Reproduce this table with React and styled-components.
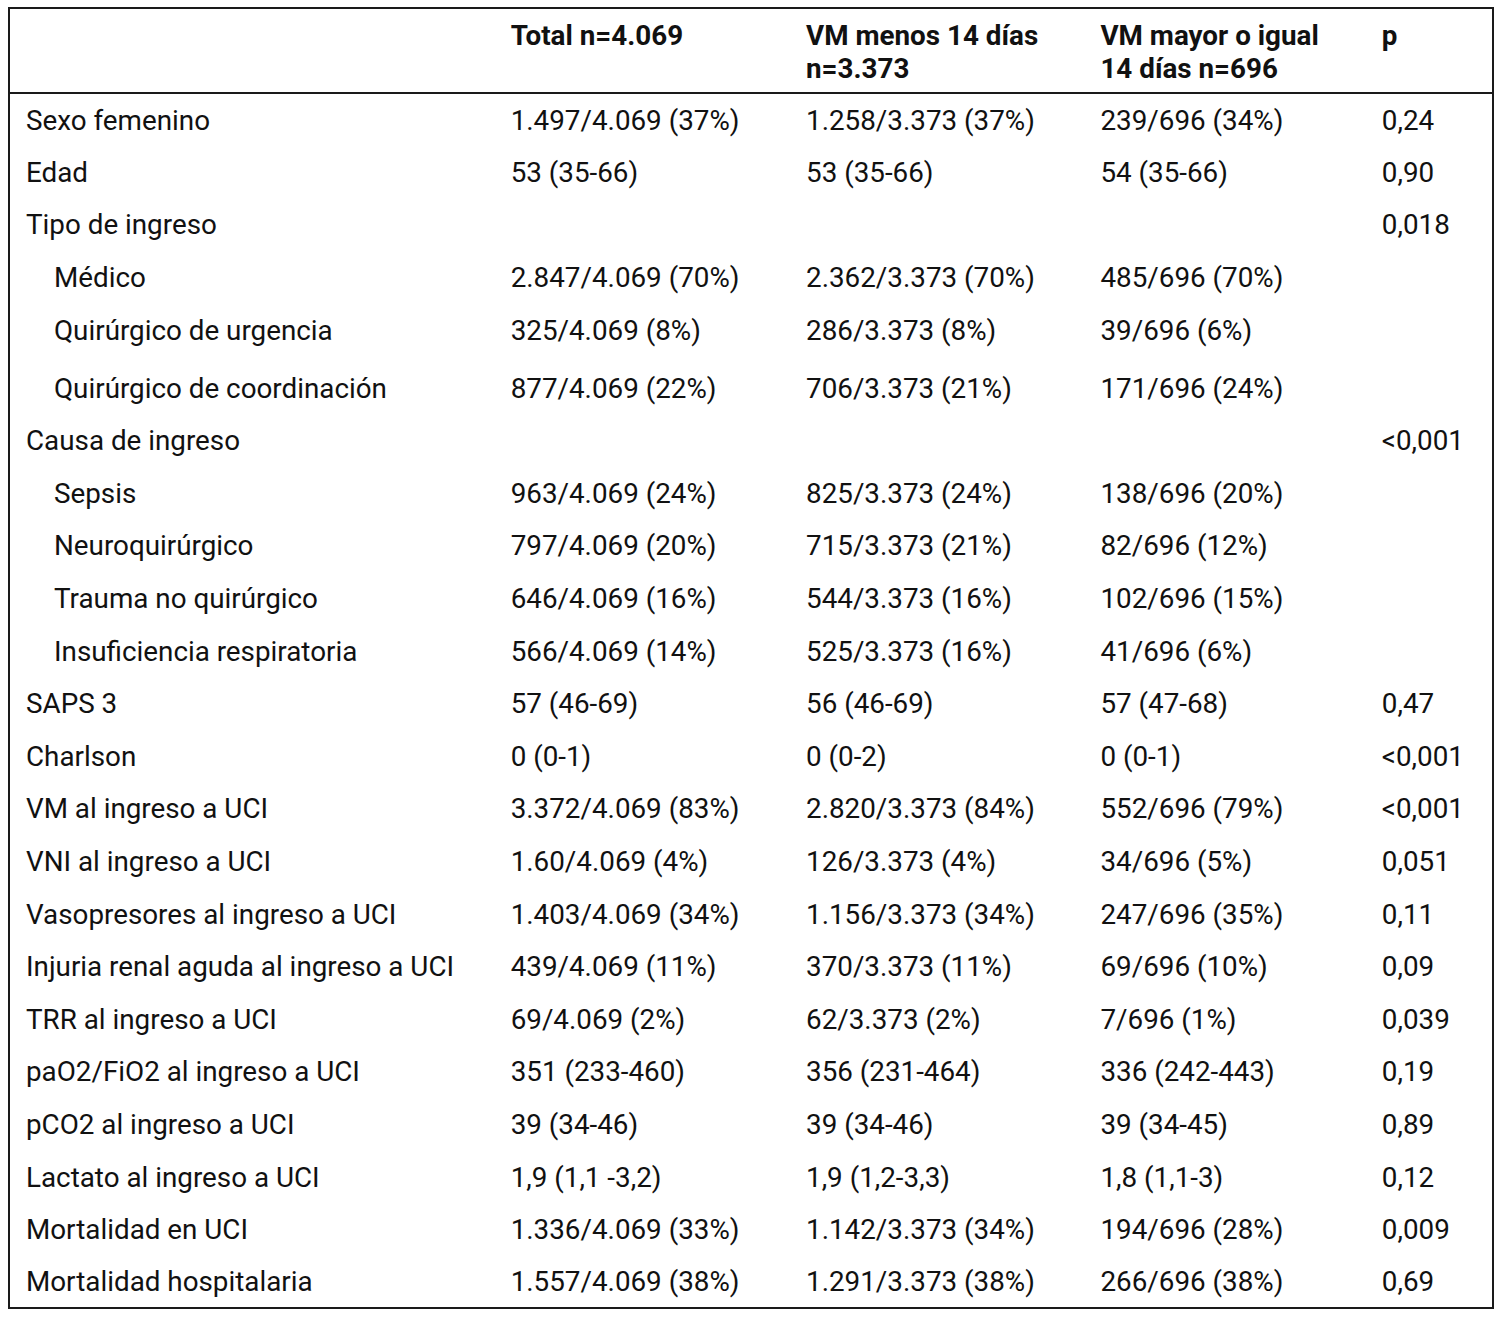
import React from "react";
import styled, { createGlobalStyle } from "styled-components";

const Global = createGlobalStyle`
  html, body { margin: 0; padding: 0; background: #fff; }
  body { font-family: Roboto, "Noto Sans", "Liberation Sans", sans-serif; color: #111; }
`;

const Page = styled.div`
  padding: 7px 0 0 8px;
`;

const Table = styled.table`
  border-collapse: collapse;
  border: 2px solid #1a1a1a;
  width: 1486px;
  table-layout: fixed;
  font-size: 27.8px;
`;

const Col = styled.col`
  width: ${(p) => p.$w}px;
`;

const HeadCell = styled.th`
  text-align: left;
  vertical-align: top;
  font-weight: 700;
  padding: 10px 0 0 16px;
  height: 85px;
  box-sizing: border-box;
  line-height: 33px;
  border-bottom: 2px solid #1a1a1a;
  white-space: nowrap;
`;

const Row = styled.tr`
  height: ${(p) => (p.$tall ? 58 : 52.6)}px;
`;

const Cell = styled.td`
  padding: ${(p) => (p.$tall ? 8 : 2)}px 0 0 ${(p) => (p.$indent ? 44 : 16)}px;
  vertical-align: middle;
  white-space: nowrap;
  line-height: 30px;
`;

const rows = [
  ["Sexo femenino", "1.497/4.069 (37%)", "1.258/3.373 (37%)", "239/696 (34%)", "0,24"],
  ["Edad", "53 (35-66)", "53 (35-66)", "54 (35-66)", "0,90"],
  ["Tipo de ingreso", "", "", "", "0,018"],
  ["Médico", "2.847/4.069 (70%)", "2.362/3.373 (70%)", "485/696 (70%)", "", true],
  ["Quirúrgico de urgencia", "325/4.069 (8%)", "286/3.373 (8%)", "39/696 (6%)", "", true],
  ["Quirúrgico de coordinación", "877/4.069 (22%)", "706/3.373 (21%)", "171/696 (24%)", "", true, true],
  ["Causa de ingreso", "", "", "", "<0,001"],
  ["Sepsis", "963/4.069 (24%)", "825/3.373 (24%)", "138/696 (20%)", "", true],
  ["Neuroquirúrgico", "797/4.069 (20%)", "715/3.373 (21%)", "82/696 (12%)", "", true],
  ["Trauma no quirúrgico", "646/4.069 (16%)", "544/3.373 (16%)", "102/696 (15%)", "", true],
  ["Insuficiencia respiratoria", "566/4.069 (14%)", "525/3.373 (16%)", "41/696 (6%)", "", true],
  ["SAPS 3", "57 (46-69)", "56 (46-69)", "57 (47-68)", "0,47"],
  ["Charlson", "0 (0-1)", "0 (0-2)", "0 (0-1)", "<0,001"],
  ["VM al ingreso a UCI", "3.372/4.069 (83%)", "2.820/3.373 (84%)", "552/696 (79%)", "<0,001"],
  ["VNI al ingreso a UCI", "1.60/4.069 (4%)", "126/3.373 (4%)", "34/696 (5%)", "0,051"],
  ["Vasopresores al ingreso a UCI", "1.403/4.069 (34%)", "1.156/3.373 (34%)", "247/696 (35%)", "0,11"],
  ["Injuria renal aguda al ingreso a UCI", "439/4.069 (11%)", "370/3.373 (11%)", "69/696 (10%)", "0,09"],
  ["TRR al ingreso a UCI", "69/4.069 (2%)", "62/3.373 (2%)", "7/696 (1%)", "0,039"],
  ["paO2/FiO2 al ingreso a UCI", "351 (233-460)", "356 (231-464)", "336 (242-443)", "0,19"],
  ["pCO2 al ingreso a UCI", "39 (34-46)", "39 (34-46)", "39 (34-45)", "0,89"],
  ["Lactato al ingreso a UCI", "1,9 (1,1 -3,2)", "1,9 (1,2-3,3)", "1,8 (1,1-3)", "0,12"],
  ["Mortalidad en UCI", "1.336/4.069 (33%)", "1.142/3.373 (34%)", "194/696 (28%)", "0,009"],
  ["Mortalidad hospitalaria", "1.557/4.069 (38%)", "1.291/3.373 (38%)", "266/696 (38%)", "0,69"],
];

export default function App() {
  return (
    <Page>
      <Global />
      <Table>
        <colgroup>
          <Col $w={485} />
          <Col $w={295} />
          <Col $w={294} />
          <Col $w={281} />
          <Col $w={127} />
        </colgroup>
        <thead>
          <tr>
            <HeadCell></HeadCell>
            <HeadCell>Total n=4.069</HeadCell>
            <HeadCell>
              VM menos 14 días
              <br />
              n=3.373
            </HeadCell>
            <HeadCell>
              VM mayor o igual
              <br />
              14 días n=696
            </HeadCell>
            <HeadCell>p</HeadCell>
          </tr>
        </thead>
        <tbody>
          {rows.map(([label, a, b, c, p, indent, tall], i) => (
            <Row key={i} $tall={tall}>
              <Cell $indent={indent} $tall={tall}>{label}</Cell>
              <Cell $tall={tall}>{a}</Cell>
              <Cell $tall={tall}>{b}</Cell>
              <Cell $tall={tall}>{c}</Cell>
              <Cell $tall={tall}>{p}</Cell>
            </Row>
          ))}
        </tbody>
      </Table>
    </Page>
  );
}
